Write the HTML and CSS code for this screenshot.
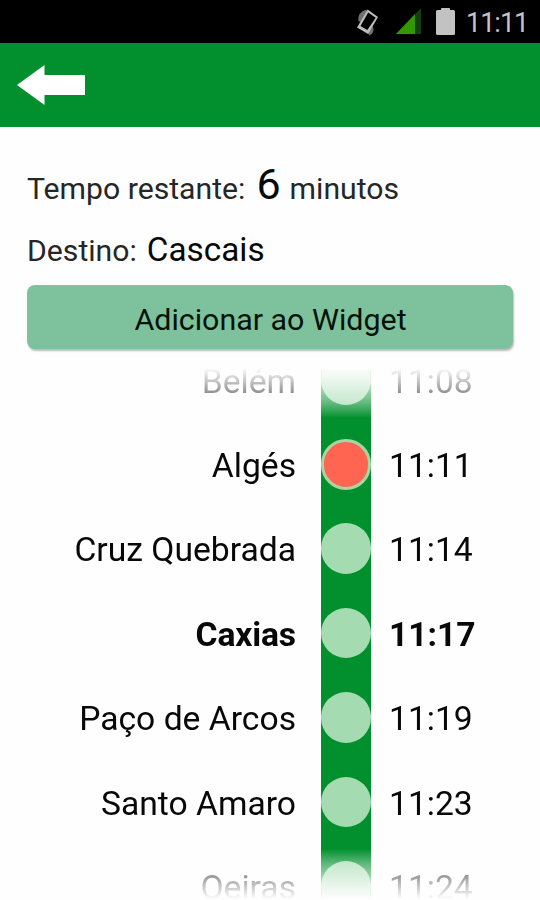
FILE: index.html
```html
<!DOCTYPE html>
<html lang="pt">
<head>
<meta charset="utf-8">
<title>Tempo restante</title>
<link rel="stylesheet" href="styles.css">
</head>
<body>
<div class="status">
  <svg class="rotate" width="26" height="30" viewBox="0 0 26 30" fill="none">
    <path d="M3.300 13Q2.500 4 11.500 1.500L12 4 6 14ZM14 27.500Q20 26 18 18L13 24Z" fill="#707070"/>
    <path d="M12.700 1.600 23 9 13.200 26 2 19.500Z" fill="#bdbdbd"/>
    <path d="M13.200 4.400 20.700 9.800 12.300 22 5.500 18Z" fill="#000"/>
  </svg>
  <svg class="signal" width="25" height="26" viewBox="0 0 25 26">
    <path d="M0 26 25 0V26Z" fill="#153d12"/>
    <path d="M0 26 19 6V26Z" fill="#329800"/>
  </svg>
  <svg class="battery" width="19" height="27" viewBox="0 0 19 27">
    <path d="M1.500 2H5V.5Q5 0 6 0H13Q14 0 14 .5V2H17.500Q19 2 19 3.500V25.500Q19 27 17.500 27H1.500Q0 27 0 25.500V3.500Q0 2 1.500 2Z" fill="#c2c2c2"/>
  </svg>
  <span class="clock">11:11</span>
</div>
<header class="bar">
  <svg width="68" height="40" viewBox="0 0 68 40"><path d="M0 20 27.500 0V10H68V30H27.500V40Z" fill="#fff"/></svg>
</header>
<main>
  <p class="info remaining"><span class="label">Tempo restante:</span><span class="minutes">6</span><span class="unit">minutos</span></p>
  <p class="info destination"><span class="label">Destino:</span><span class="place">Cascais</span></p>
  <button class="add">Adicionar ao Widget</button>
</main>
<section class="route">
  <div class="stops">
    <div class="stop"><span class="name">Belém</span><span class="track"><i class="dot"></i></span><span class="time">11:08</span></div>
    <div class="stop"><span class="name">Algés</span><span class="track"><i class="dot current"></i></span><span class="time">11:11</span></div>
    <div class="stop"><span class="name">Cruz Quebrada</span><span class="track"><i class="dot"></i></span><span class="time">11:14</span></div>
    <div class="stop selected"><span class="name">Caxias</span><span class="track"><i class="dot"></i></span><span class="time">11:17</span></div>
    <div class="stop"><span class="name">Paço de Arcos</span><span class="track"><i class="dot"></i></span><span class="time">11:19</span></div>
    <div class="stop"><span class="name">Santo Amaro</span><span class="track"><i class="dot"></i></span><span class="time">11:23</span></div>
    <div class="stop"><span class="name">Oeiras</span><span class="track"><i class="dot"></i></span><span class="time">11:24</span></div>
  </div>
</section>
</body>
</html>
```
FILE: styles.css
```css
* { box-sizing: border-box; }
body {
  margin: 0;
  width: 540px;
  height: 900px;
  overflow: hidden;
  display: flex;
  flex-direction: column;
  background: #fefefe;
  color: #080808;
  font-family: Roboto, sans-serif;
}
.status {
  flex: none;
  height: 43px;
  padding-right: 12px;
  background: #000;
  display: flex;
  align-items: flex-start;
  justify-content: flex-end;
}
.rotate { margin: 8px 15px 0 0; }
.signal { margin: 8px 15px 0 0; }
.battery { margin: 8px 11px 0 0; }
.clock {
  width: 62px;
  font-size: 27px;
  line-height: 46px;
  letter-spacing: -1px;
  color: #c4c4c4;
  white-space: nowrap;
}
.bar {
  flex: none;
  height: 84px;
  padding: 22px 17px;
  background: #02902e;
}
.bar svg { display: block; }
main {
  flex: none;
  height: 241px;
  padding: 32px 27px 0;
}
.info {
  margin: 0;
  display: flex;
  align-items: baseline;
  font-size: 30.200px;
  white-space: nowrap;
}
.info .label, .info .unit { color: #262626; }
.remaining { height: 63px; line-height: 50px; }
.destination { height: 63px; line-height: 56px; }
.minutes { margin: 0 9px 0 11px; font-size: 43px; }
.place { margin-left: 10px; font-size: 33.300px; }
.add {
  display: block;
  width: 486px;
  height: 64px;
  padding: 5px 0 0 1px;
  border: 0;
  border-radius: 8px;
  background: #7dc29c;
  box-shadow: 1px 2px 2px #bbb;
  color: #061208;
  font: 30.400px Roboto, sans-serif;
}
.route {
  flex: none;
  height: 532px;
  overflow: hidden;
  -webkit-mask-image: linear-gradient(transparent, rgba(0,0,0,.62) 35px, #000 50px, #000 481px, rgba(0,0,0,.62) 496px, transparent 531px);
  mask-image: linear-gradient(transparent, rgba(0,0,0,.62) 35px, #000 50px, #000 481px, rgba(0,0,0,.62) 496px, transparent 531px);
}
.stops { margin-top: -30.300px; }
.stop {
  height: 84.375px;
  display: grid;
  grid-template-columns: 296px 50.600px 1fr;
  column-gap: 24.700px;
  font-size: 33.650px;
  line-height: 88px;
  white-space: nowrap;
}
.name { text-align: right; }
.track {
  height: 85px;
  padding-top: 17px;
  background: #02902e;
}
.dot {
  display: block;
  height: 50.600px;
  border-radius: 50%;
  background: #a5dbb0;
}
.dot.current {
  background: #ff6550;
  border: 3px solid #a9d5a5;
}
.time { margin-left: -7px; }
.selected { font-weight: 700; }
.selected .name { letter-spacing: -.15px; }
```
